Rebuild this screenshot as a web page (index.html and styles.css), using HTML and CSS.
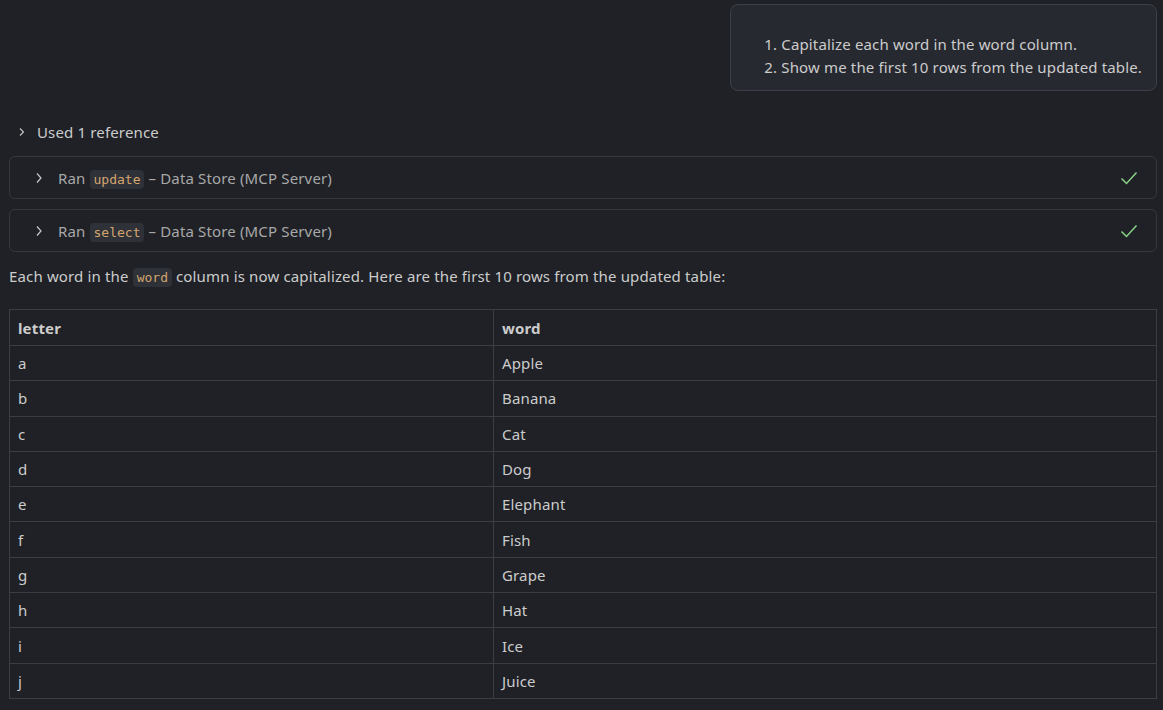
FILE: index.html
```html
<!DOCTYPE html>
<html>
<head>
<meta charset="utf-8">
<link rel="stylesheet" href="styles.css">
</head>
<body>
<div class="chat">
  <div class="user-row">
    <div class="bubble">
      <ol>
        <li>Capitalize each word in the word column.</li>
        <li>Show me the first 10 rows from the updated table.</li>
      </ol>
    </div>
  </div>

  <div class="refs">
    <svg class="chev" width="10" height="10" viewBox="0 0 10 10"><path d="M3 1.5 L6.5 5 L3 8.5" fill="none" stroke="#c8c8c8" stroke-width="1.1"/></svg>
    <span>Used 1 reference</span>
  </div>

  <div class="tool">
    <svg class="chev" width="10" height="12" viewBox="0 0 10 12"><path d="M3 1.5 L7 6 L3 10.5" fill="none" stroke="#c8c8c8" stroke-width="1.2"/></svg>
    <span class="tool-text">Ran <code>update</code> – Data Store (MCP Server)</span>
    <svg class="check" width="18" height="14" viewBox="0 0 18 14"><path d="M1.5 7.5 L6.5 12.5 L16.5 1.5" fill="none" stroke="#89d185" stroke-width="1.5"/></svg>
  </div>

  <div class="tool">
    <svg class="chev" width="10" height="12" viewBox="0 0 10 12"><path d="M3 1.5 L7 6 L3 10.5" fill="none" stroke="#c8c8c8" stroke-width="1.2"/></svg>
    <span class="tool-text">Ran <code>select</code> – Data Store (MCP Server)</span>
    <svg class="check" width="18" height="14" viewBox="0 0 18 14"><path d="M1.5 7.5 L6.5 12.5 L16.5 1.5" fill="none" stroke="#89d185" stroke-width="1.5"/></svg>
  </div>

  <p class="answer">Each word in the <code>word</code> column is now capitalized. Here are the first 10 rows from the updated table:</p>

  <table class="data">
    <thead>
      <tr><th>letter</th><th>word</th></tr>
    </thead>
    <tbody>
      <tr><td>a</td><td>Apple</td></tr>
      <tr><td>b</td><td>Banana</td></tr>
      <tr><td>c</td><td>Cat</td></tr>
      <tr><td>d</td><td>Dog</td></tr>
      <tr><td>e</td><td>Elephant</td></tr>
      <tr><td>f</td><td>Fish</td></tr>
      <tr><td>g</td><td>Grape</td></tr>
      <tr><td>h</td><td>Hat</td></tr>
      <tr><td>i</td><td>Ice</td></tr>
      <tr><td>j</td><td>Juice</td></tr>
    </tbody>
  </table>
</div>
</body>
</html>
```

FILE: styles.css
```css
html, body {
  margin: 0;
  padding: 0;
  background: #1f2126;
}
body {
  font-family: "Noto Sans", "Open Sans", sans-serif;
  font-size: 15px;
  letter-spacing: 0.15px;
  color: #cccccc;
}
.chat {
  padding: 4px 6px 0 9px;
  display: flex;
  flex-direction: column;
}
.user-row {
  display: flex;
  justify-content: flex-end;
}
.bubble {
  background: #272930;
  border: 1px solid #3c3f47;
  border-radius: 8px;
  padding: 28px 14px 11px 34px;
}
.bubble ol {
  margin: 0;
  padding-left: 16px;
}
.bubble li {
  line-height: 23px;
}
.refs {
  display: flex;
  align-items: center;
  gap: 10px;
  margin-top: 29px;
  padding-left: 8px;
  height: 24px;
  color: #cccccc;
}
.tool {
  display: flex;
  align-items: center;
  margin-top: 12px;
  height: 43px;
  border: 1px solid #34373e;
  border-radius: 6px;
  box-sizing: border-box;
  padding: 0 18px 0 24px;
  color: #a8a8a8;
}
.tool + .tool {
  margin-top: 10px;
}
.tool .chev {
  margin-right: 14px;
}
.tool-text {
  flex: 1;
}
code {
  font-family: "DejaVu Sans Mono", "Liberation Mono", monospace;
  font-size: 13px;
  letter-spacing: 0;
  background: #2e3138;
  color: #d4a66e;
  border-radius: 4px;
  padding: 2px 4px;
}
.answer {
  margin: 12px 0 0 0;
  line-height: 24px;
}
.data {
  margin-top: 19px;
  border-collapse: collapse;
  width: 1148px;
}
.data th, .data td {
  border: 1px solid #3a3d44;
  text-align: left;
  padding: 0 8px;
  height: 34.3px;
}
.data th {
  font-weight: 700;
  height: 35px;
}
.data th:first-child, .data td:first-child {
  width: 467px;
}
```
